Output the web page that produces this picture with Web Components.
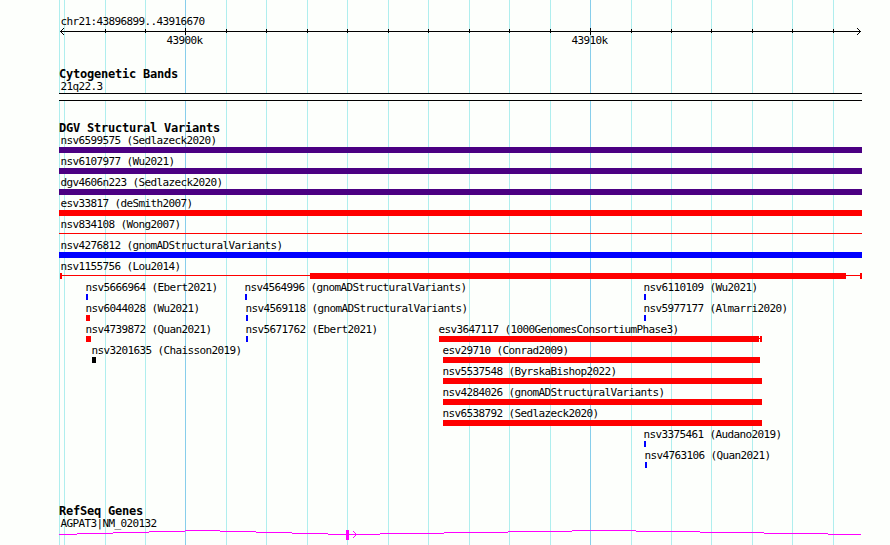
<!DOCTYPE html>
<html lang="en">
<head>
<meta charset="utf-8">
<title>chr21:43896899..43916670</title>
<style>
html, body { margin: 0; background: #fdfffc; }
body { width: 890px; height: 545px; overflow: hidden; color: #000; }
</style>
</head>
<body>
<genome-browser></genome-browser>
<script>
const MINOR = '#afeeee', MAJOR = '#87ceeb';
const define = (name, render) => customElements.define(name, class extends HTMLElement {
  connectedCallback() {
    if (this.shadowRoot) return;
    this.attachShadow({ mode: 'open' }).innerHTML = render(this);
  }
});
const rect = (x, y, w, h, f) => `<rect x="${x}" y="${y}" width="${w}" height="${h}" fill="${f}"/>`;
const ticks = [105,145,185,226,266,307,347,388,428,469,509,550,590,631,671,711,752,792,833];
const isMajor = x => x === 185 || x === 590;

/* Small monospaced caption on a 6px advance */
define('track-label', () => `<style>
:host { display: block; height: 13px; font: 11px/13px "DejaVu Sans Mono", monospace; letter-spacing: -0.622px; white-space: pre; text-indent: 0.5px; }
</style><slot></slot>`);

/* Bold track title on a 7px advance */
define('track-title', () => `<style>
:host { display: block; height: 13px; padding-left: 59px; font: bold 12px/13px "DejaVu Sans Mono", monospace; letter-spacing: -0.224px; white-space: pre; }
</style><slot></slot>`);

/* Vertical guide lines behind every track */
define('guide-lines', () => `<style>:host, svg { display: block; }</style>
<svg width="890" height="545" shape-rendering="crispEdges">${[59,64,...ticks].map(x => rect(x,0,1,545,isMajor(x)?MAJOR:MINOR)).join('')}</svg>`);

define('scale-ruler', () => `<style>
:host { display: block; height: 68px; padding-top: 15px; box-sizing: border-box; }
.range { padding-left: 60px; } svg { display: block; }
.marks { display: grid; margin-top: -1px; } .marks > * { grid-area: 1 / 1; }
</style>
<track-label class="range">chr21:43896899..43916670</track-label>
<svg width="890" height="7" shape-rendering="crispEdges">${rect(60,3,801,1,'#000')}
${ticks.map(x => isMajor(x) ? rect(x,0,1,7,'#000') : rect(x,1,1,4,'#000')).join('')}
<path d="M63 0h1v1h-1zM62 1h1v1h-1zM61 2h1v1h-1zM61 4h1v1h-1zM62 5h1v1h-1zM63 6h1v1h-1zM857 0h1v1h-1zM858 1h1v1h-1zM859 2h1v1h-1zM859 4h1v1h-1zM858 5h1v1h-1zM857 6h1v1h-1z"/></svg>
<div class="marks"><track-label style="margin-left:166px">43900k</track-label><track-label style="margin-left:571px">43910k</track-label></div>`);

define('band-track', () => `<style>
:host { display: block; height: 54px; }
track-label { padding-left: 60px; margin-top: -1px; }
.band { width: 803px; height: 8px; box-sizing: border-box; border: solid #000; border-width: 1px 0; background: #fdfffc; margin: 0 0 0 59px; }
</style><track-title>Cytogenetic Bands</track-title><track-label>21q22.3</track-label><div class="band"></div>`);

/* One variant: caption above its glyph; attributes hold the span in pixels */
define('variant-feature', el => {
  const x = +el.getAttribute('x'), w = +el.getAttribute('w'), c = el.getAttribute('color');
  const kind = el.getAttribute('kind');
  const lx = x === 59 ? 1 : -1;
  let g = rect(0,0,w,6,c);
  if (kind === 'line') g = rect(0,2,w,1,c);
  if (kind === 'range') g = rect(1,0,2,6,c)+rect(1,2,w-1,1,c)+rect(251,0,536,6,c)+rect(801,0,2,6,c);
  if (kind === 'capped') g = rect(0,0,320,6,c)+rect(320,2,1,1,c)+rect(321,0,2,6,c);
  return `<style>
:host { display: block; grid-area: 1 / 1; margin-left: ${x}px; width: max-content; }
track-label { margin-left: ${lx}px; } svg { display: block; }
</style><track-label><slot></slot></track-label><svg width="${w}" height="6" shape-rendering="crispEdges">${g}</svg>`;
});

const P = '#4b0082', R = '#ff0000', B = '#0000ff';
const rows = [
  [[59,803,P,'nsv6599575 (Sedlazeck2020)']],
  [[59,803,P,'nsv6107977 (Wu2021)']],
  [[59,803,P,'dgv4606n223 (Sedlazeck2020)']],
  [[59,803,R,'esv33817 (deSmith2007)']],
  [[59,803,R,'nsv834108 (Wong2007)','line']],
  [[59,803,B,'nsv4276812 (gnomADStructuralVariants)']],
  [[59,803,R,'nsv1155756 (Lou2014)','range']],
  [[86,2,B,'nsv5666964 (Ebert2021)'],[245,2,B,'nsv4564996 (gnomADStructuralVariants)'],[644,2,B,'nsv6110109 (Wu2021)']],
  [[86,4,R,'nsv6044028 (Wu2021)'],[246,2,B,'nsv4569118 (gnomADStructuralVariants)'],[644,2,B,'nsv5977177 (Almarri2020)']],
  [[86,5,R,'nsv4739872 (Quan2021)'],[246,2,B,'nsv5671762 (Ebert2021)'],[439,323,R,'esv3647117 (1000GenomesConsortiumPhase3)','capped']],
  [[92,4,'#000','nsv3201635 (Chaisson2019)'],[443,317,R,'esv29710 (Conrad2009)']],
  [[443,319,R,'nsv5537548 (ByrskaBishop2022)']],
  [[443,319,R,'nsv4284026 (gnomADStructuralVariants)']],
  [[443,319,R,'nsv6538792 (Sedlazeck2020)']],
  [[644,2,B,'nsv3375461 (Audano2019)']],
  [[645,2,B,'nsv4763106 (Quan2021)']]
];
define('variant-track', () => `<style>
:host { display: block; height: 383px; }
.row { display: grid; height: 21px; } .rows { margin-top: -1px; }
</style><track-title>DGV Structural Variants</track-title><div class="rows">${rows.map(r =>
  `<div class="row">${r.map(([x,w,c,t,k]) => `<variant-feature x="${x}" w="${w}" color="${c}" kind="${k||'bar'}">${t}</variant-feature>`).join('')}</div>`).join('')}</div>`);

/* Intron steps: [from, to, y] */
const steps = [[59,77,6],[77,113,5],[113,149,4],[149,185,3],[185,220,2],[220,256,3],[256,292,4],[292,328,5],[328,380,6],
 [380,444,5],[444,508,4],[508,572,3],[572,636,2],[636,700,3],[700,764,4],[764,828,5],[828,861,6]];
define('gene-track', () => `<style>
:host { display: block; } track-label { padding-left: 60px; margin-top: -1px; } svg { display: block; margin-top: -2px; }
</style><track-title>RefSeq Genes</track-title><track-label>AGPAT3|NM_020132</track-label>
<svg width="890" height="17" shape-rendering="crispEdges">${steps.map(([a,b,y]) => rect(a,y,b-a,1,'#f0f')).join('')}${rect(346,2,3,10,'#f0f')}
<path fill="#f0f" d="M353 3h1v1h-1zM354 4h1v1h-1zM355 5h1v1h-1zM355 7h1v1h-1zM354 8h1v1h-1zM353 9h1v1h-1z"/></svg>`);

define('genome-browser', () => `<style>
:host { display: grid; width: 890px; height: 545px; overflow: hidden; }
guide-lines, main { grid-area: 1 / 1; }
</style><guide-lines></guide-lines><main><scale-ruler></scale-ruler><band-track></band-track><variant-track></variant-track><gene-track></gene-track></main>`);
</script>
</body>
</html>
